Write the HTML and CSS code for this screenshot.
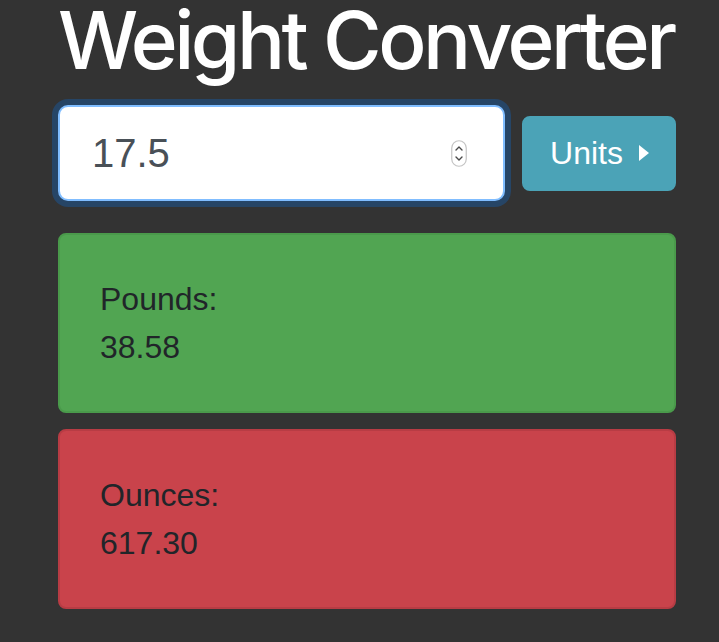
FILE: index.html
```html
<!DOCTYPE html>
<html lang="en">
<head>
<meta charset="utf-8">
<title>Weight Converter</title>
<link rel="stylesheet" href="styles.css">
</head>
<body>
<main class="page">
  <h1 class="title">Weight Converter</h1>
  <form class="input-row">
    <div class="field">
      <input class="field-input" type="text" value="17.5" aria-label="Grams">
      <svg class="spinner" width="16" height="27" viewBox="0 0 16 27" aria-hidden="true">
        <rect x="0.75" y="0.75" width="14.5" height="25.5" rx="7.25" fill="#fff" stroke="#c4c4c4" stroke-width="1.2"/>
        <path d="M5 10 L8 7 L11 10" fill="none" stroke="#4a4a4a" stroke-width="1.4" stroke-linecap="round" stroke-linejoin="round"/>
        <path d="M5 17 L8 20 L11 17" fill="none" stroke="#4a4a4a" stroke-width="1.4" stroke-linecap="round" stroke-linejoin="round"/>
      </svg>
    </div>
    <button class="btn-units" type="button">Units<span class="caret"></span></button>
  </form>
  <section class="card card-green">
    <div class="card-label">Pounds:</div>
    <div class="card-value">38.58</div>
  </section>
  <section class="card card-red">
    <div class="card-label">Ounces:</div>
    <div class="card-value">617.30</div>
  </section>
</main>
</body>
</html>
```
FILE: styles.css
```css
html, body {
  margin: 0;
  padding: 0;
  background: #333333;
  height: 100%;
  overflow: hidden;
}

body {
  font-family: "Liberation Sans", Arial, sans-serif;
  color: #212529;
}

.page {
  padding: 0 43px 0 58px;
}

.title {
  margin: -8px 0 17px 0;
  font-family: Inter, "Liberation Sans", Arial, sans-serif;
  font-size: 80px;
  line-height: 96px;
  font-weight: 500;
  letter-spacing: -3.5px;
  white-space: nowrap;
  color: #ffffff;
}

.input-row {
  display: flex;
  align-items: center;
  gap: 17px;
  margin: 0 0 32px 0;
}

.field {
  flex: 1 1 0;
  min-width: 0;
  display: flex;
  align-items: center;
  height: 92px;
  background: #ffffff;
  border: 2px solid #80bdff;
  border-radius: 10px;
  box-shadow: 0 0 0 6px rgba(0, 123, 255, 0.25);
  padding: 0 36px 0 32px;
}

.field-input {
  flex: 1 1 0;
  width: 0;
  min-width: 0;
  border: 0;
  outline: none;
  padding: 0;
  background: transparent;
  font-family: "Liberation Sans", Arial, sans-serif;
  font-size: 40px;
  line-height: 60px;
  color: #495057;
}

.spinner {
  display: block;
  flex: none;
}

.btn-units {
  flex: none;
  display: flex;
  align-items: center;
  height: 75px;
  padding: 0 25px 0 26px;
  border: 2px solid #4ba3b7;
  border-radius: 8px;
  background: #4ba3b7;
  color: #ffffff;
  font-family: "Liberation Sans", Arial, sans-serif;
  font-size: 32px;
  line-height: 48px;
}

.caret {
  display: inline-block;
  width: 0;
  height: 0;
  margin-left: 16px;
  border-top: 8.5px solid transparent;
  border-bottom: 8.5px solid transparent;
  border-left: 10px solid #ffffff;
}

.card {
  border-radius: 8px;
  border: 2px solid;
  padding: 40px 40px;
  font-size: 32px;
  line-height: 48px;
  color: #212529;
}

.card-green {
  background: #51a552;
  border-color: #4a9a4b;
  margin-bottom: 16px;
}

.card-red {
  background: #c9434b;
  border-color: #b83c44;
}
```
